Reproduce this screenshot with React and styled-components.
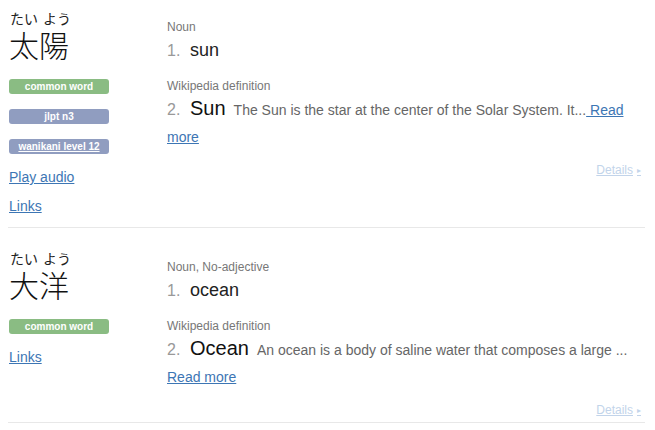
import styled, { createGlobalStyle } from 'styled-components'

const GlobalStyle = createGlobalStyle`
    body {
        margin: 8px;
        background: #fff;
        font-family: "Liberation Sans", Arial, sans-serif;
        color: #222;
    }
`

const List = styled.div`
    width: 637px;
`

const Entry = styled.div`
    display: grid;
    grid-template-columns: 159px 1fr;
    padding-bottom: 2px;
    border-bottom: 1px solid #e8e8e8;
    & + & { margin-top: 20px; }
`

const Left = styled.div`
    padding: 2px 0 10px 1px;
`

const Furigana = styled.div`
    display: flex;
    gap: 5px;
    padding-left: 1px;
    font-family: "Noto Sans CJK JP", sans-serif;
    font-size: 14px;
    line-height: 16px;
    color: #222;
`

const Kanji = styled.div`
    font-family: "Noto Sans CJK JP", sans-serif;
    font-size: 30px;
    font-weight: 300;
    line-height: 36px;
    color: #111;
    margin-bottom: 17px;
`

const Tag = styled.div`
    width: 100px;
    height: 15px;
    line-height: 15px;
    border-radius: 3px;
    background: ${({ $color }) => $color};
    color: #fff;
    font-size: 10px;
    font-weight: bold;
    text-align: center;
    margin-bottom: 15px;
    a { color: #fff; }
`

const SideLink = styled.a`
    display: block;
    font-size: 14px;
    line-height: 18px;
    color: #3d76b4;
    text-decoration: underline;
    margin-top: -1px;
    & + & { margin-top: 11px; }
`

const Right = styled.div`
    padding-top: 10px;
`

const Label = styled.div`
    font-size: 12px;
    line-height: 18px;
    color: #777;
`

const Meaning = styled.div`
    font-size: 18px;
    line-height: 24px;
    color: #222;
    margin: 2px 0 14px;
`

const WikiMeaning = styled.div`
    font-size: 18px;
    line-height: 26px;
    color: #222;
`

const Num = styled.span`
    display: inline-block;
    width: 23px;
    font-size: 16px;
    color: #999;
`

const WikiTitle = styled.span`
    font-size: 20px;
    color: #111;
    margin-right: 3px;
`

const Desc = styled.span`
    font-size: 14px;
    color: #666;
    a { color: #3d76b4; }
`

const DetailsRow = styled.div`
    text-align: right;
    font-size: 12px;
    line-height: 18px;
    margin-top: 11px;
    padding-right: 4px;
    a {
        color: #c2d4ea;
        text-decoration: underline;
    }
    small {
        font-size: 8px;
        margin-left: 4px;
        vertical-align: 1px;
    }
`

const entries = [
    {
        furigana: ['たい', 'よう'],
        kanji: '太陽',
        tags: [
            { text: 'common word', color: '#8abc83' },
            { text: 'jlpt n3', color: '#909dc0' },
            { text: 'wanikani level 12', color: '#909dc0', link: true },
        ],
        links: ['Play audio', 'Links'],
        pos: 'Noun',
        meaning: 'sun',
        wikiPos: 'Wikipedia definition',
        wikiTitle: 'Sun',
        wikiText: 'The Sun is the star at the center of the Solar System. It...',
    },
    {
        furigana: ['たい', 'よう'],
        kanji: '大洋',
        tags: [{ text: 'common word', color: '#8abc83' }],
        links: ['Links'],
        pos: 'Noun, No-adjective',
        meaning: 'ocean',
        wikiPos: 'Wikipedia definition',
        wikiTitle: 'Ocean',
        wikiText: 'An ocean is a body of saline water that composes a large ...',
    },
]

const App = () => (
    <List>
        <GlobalStyle />
        {entries.map((e) => (
            <Entry key={e.kanji}>
                <Left>
                    <Furigana>
                        {e.furigana.map((f, i) => <span key={i}>{f}</span>)}
                    </Furigana>
                    <Kanji>{e.kanji}</Kanji>
                    {e.tags.map((t) => (
                        <Tag key={t.text} $color={t.color}>
                            {t.link ? <a href="#">{t.text}</a> : t.text}
                        </Tag>
                    ))}
                    {e.links.map((l) => <SideLink key={l} href="#">{l}</SideLink>)}
                </Left>
                <Right>
                    <Label>{e.pos}</Label>
                    <Meaning><Num>1.</Num>{e.meaning}</Meaning>
                    <Label>{e.wikiPos}</Label>
                    <WikiMeaning>
                        <Num>2.</Num>
                        <WikiTitle>{e.wikiTitle}</WikiTitle>{' '}
                        <Desc>
                            {e.wikiText}
                            <a href="#"> Read more</a>
                        </Desc>
                    </WikiMeaning>
                    <DetailsRow>
                        <a href="#">Details<small>▸</small></a>
                    </DetailsRow>
                </Right>
            </Entry>
        ))}
    </List>
)

export default App
